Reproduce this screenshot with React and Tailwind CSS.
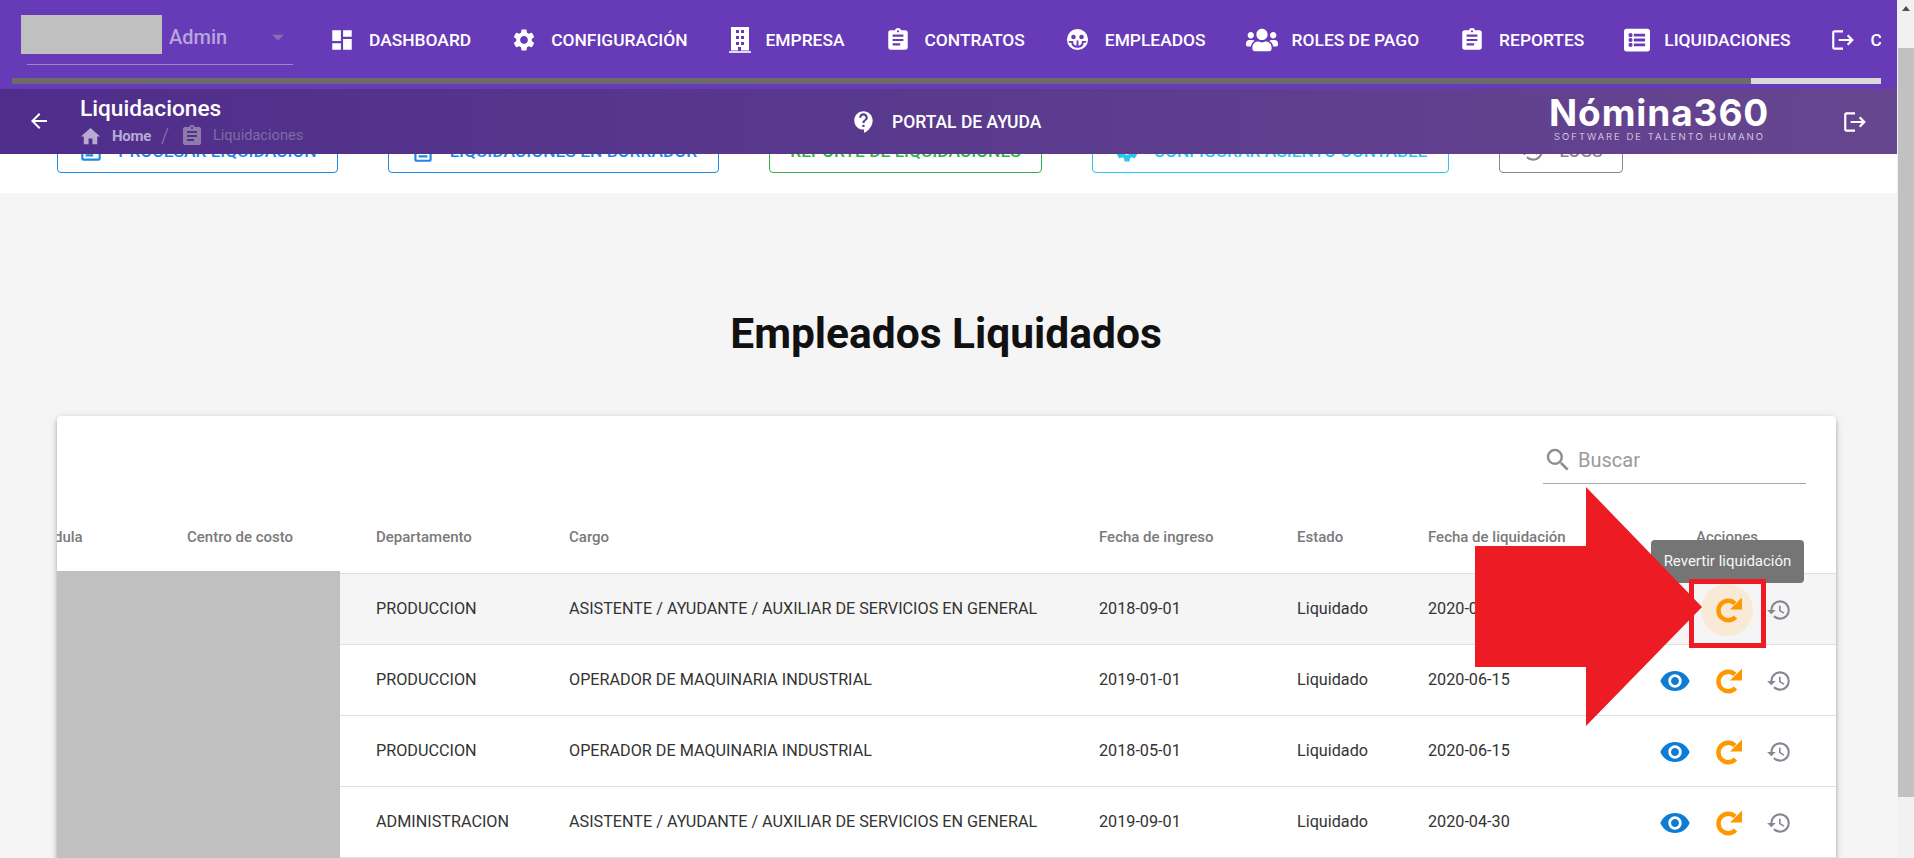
import {
  MdDashboard, MdSettings, MdAssignment, MdLogout, MdHome, MdContactSupport, MdArrowBack, MdSearch,
  MdVisibility, MdHistory, MdArrowDropDown, MdOutlineAssignment, MdOutlineDescription,
} from 'react-icons/md'
import { FaUsers, FaListAlt } from 'react-icons/fa'

function BuildingIcon({ className }) {
  return (
    <svg viewBox="0 0 24 26" className={className} aria-hidden="true">
      <path
        fillRule="evenodd"
        fill="currentColor"
        d="M3 0h18v23.5H3V0Zm5 3v3h3V3H8Zm5 0v3h3V3h-3ZM8 9v3h3V9H8Zm5 0v3h3V9h-3Zm-5 6v3h3v-3H8Zm5 0v3h3v-3h-3Zm-3 5v3.5h3V20h-3Z"
      />
      <rect x="1" y="24.2" width="22" height="1.6" fill="currentColor" />
    </svg>
  )
}

function FaceIcon({ className }) {
  return (
    <svg viewBox="0 0 24 24" className={className} aria-hidden="true">
      <circle cx="12" cy="12" r="11" fill="currentColor" />
      <circle cx="7.8" cy="9.4" r="2.4" fill="#673ab7" />
      <circle cx="16.2" cy="9.4" r="2.4" fill="#673ab7" />
      <path d="M3 14.5h3.5c0 3 1.5 5 5.5 5s5.5-2 5.5-5H21" fill="none" stroke="#673ab7" strokeWidth="2" />
      <path d="M12 13v6.5" fill="none" stroke="#673ab7" strokeWidth="2" />
    </svg>
  )
}

function RedoIcon({ className }) {
  return (
    <svg viewBox="0 0 26 26" className={className} aria-hidden="true">
      <path d="M19 6.5A9.75 9.75 0 1 0 19.5 20" fill="none" stroke="currentColor" strokeWidth="4.5" />
      <path d="M26 0.5V12.5H14Z" fill="currentColor" />
    </svg>
  )
}

const navItems = [
  { label: 'DASHBOARD', icon: MdDashboard, size: 'h-[26px] w-[26px]' },
  { label: 'CONFIGURACIÓN', icon: MdSettings, size: 'h-[26px] w-[26px]' },
  { label: 'EMPRESA', icon: BuildingIcon, size: 'h-[26px] w-[24px]' },
  { label: 'CONTRATOS', icon: MdAssignment, size: 'h-[26px] w-[26px]' },
  { label: 'EMPLEADOS', icon: FaceIcon, size: 'ml-px mr-[2px] h-[23px] w-[23px]' },
  { label: 'ROLES DE PAGO', icon: FaUsers, size: 'h-[26px] w-[32px]' },
  { label: 'REPORTES', icon: MdAssignment, size: 'h-[26px] w-[26px]' },
  { label: 'LIQUIDACIONES', icon: FaListAlt, size: 'h-[26px] w-[26px]' },
  { label: 'C', icon: MdLogout, size: 'h-[26px] w-[26px]' },
]

const rows = [
  { dept: 'PRODUCCION', cargo: 'ASISTENTE / AYUDANTE / AUXILIAR DE SERVICIOS EN GENERAL', ingreso: '2018-09-01', fecha: '2020-06-15', hover: true },
  { dept: 'PRODUCCION', cargo: 'OPERADOR DE MAQUINARIA INDUSTRIAL', ingreso: '2019-01-01', fecha: '2020-06-15' },
  { dept: 'PRODUCCION', cargo: 'OPERADOR DE MAQUINARIA INDUSTRIAL', ingreso: '2018-05-01', fecha: '2020-06-15' },
  { dept: 'ADMINISTRACION', cargo: 'ASISTENTE / AYUDANTE / AUXILIAR DE SERVICIOS EN GENERAL', ingreso: '2019-09-01', fecha: '2020-04-30' },
]

const colsClass = 'grid grid-cols-[130px_189px_193px_530px_198px_131px_221px_156px] items-center'

function NavBar() {
  return (
    <div className="flex h-[89px] bg-[#673ab7]">
      <div className="w-[329px] shrink-0">
        <div className="ml-[21px] mt-[15px] flex">
          <div className="h-[39px] w-[141px] bg-[#c0c0c0]" />
          <span className="ml-[7px] text-[20px] font-medium leading-[44px] text-[#b7a5dc]">Admin</span>
          <MdArrowDropDown className="ml-[37px] mt-[8px] h-[28px] w-[28px] text-[#8670b5]" />
        </div>
        <div className="ml-[27px] mt-[5px] h-px w-[266px] bg-[#9c85cf]" />
      </div>
      <div className="flex h-[80px] w-[1552px] items-center gap-[40px] overflow-hidden">
        {navItems.map(({ label, icon: Icon, size }) => (
          <div key={label} className="flex shrink-0 items-center gap-[14px] text-[17.4px] font-medium text-white">
            <Icon className={size} />
            <span className="whitespace-nowrap">{label}</span>
          </div>
        ))}
      </div>
    </div>
  )
}

function SubBar() {
  return (
    <div className="flex h-[65px] items-center bg-gradient-to-r from-[#4f2d8b] to-[#66468f] text-white">
      <MdArrowBack className="ml-[27px] h-[24px] w-[24px] shrink-0 -translate-y-px" />
      <div className="ml-[29px] w-[771px] shrink-0 self-start pt-[7px]">
        <div className="text-[22.7px] font-medium leading-[26px]">Liquidaciones</div>
        <div className="mt-[1px] flex h-[26px] items-center text-[15px]">
          <MdHome className="-ml-[1px] h-[23px] w-[23px] text-[#b9aad2]" />
          <span className="ml-[10px] font-bold tracking-[-0.3px] text-[#b9aad2]">Home</span>
          <span className="ml-[10px] text-[20px] font-light text-[#8f7cab]">/</span>
          <MdAssignment className="ml-[11px] h-[24px] w-[24px] text-[#8f7cab]" />
          <span className="ml-[9px] text-[14.6px] text-[#7f6ba3]">Liquidaciones</span>
        </div>
      </div>
      <MdContactSupport className="h-[26px] w-[26px] shrink-0" />
      <span className="ml-[15px] w-[657px] shrink-0 pt-[2px] text-[17.5px] font-medium">PORTAL DE AYUDA</span>
      <div className="w-[293px] shrink-0 self-start pt-[4px] font-['Inter',sans-serif]">
        <div className="text-[37px] font-bold leading-[39px] tracking-[0.9px]">Nómina360</div>
        <div className="ml-[5px] text-[9.5px] font-light leading-[10px] tracking-[2.03px] text-[#e6e0ef]">SOFTWARE DE TALENTO HUMANO</div>
      </div>
      <MdLogout className="h-[26px] w-[26px] shrink-0" />
    </div>
  )
}

function OutlineButton({ className, icon: Icon, children }) {
  return (
    <div className={`flex h-[44px] items-center justify-center gap-[14px] rounded-[4px] border text-[17.4px] font-medium ${className}`}>
      {Icon ? <Icon className="h-[26px] w-[26px]" /> : null}
      <span>{children}</span>
    </div>
  )
}

function EmployeeRow({ row }) {
  return (
    <div className={`${colsClass} h-[71px] border-b border-[#e0e0e0] pt-px text-[16.2px] text-[#333] ${row.hover ? 'bg-[#f5f5f5]' : ''}`}>
      <div />
      <div />
      <div>{row.dept}</div>
      <div>{row.cargo}</div>
      <div>{row.ingreso}</div>
      <div>Liquidado</div>
      <div>{row.fecha}</div>
      <div className="flex">
        <div className="flex h-[52px] w-[52px] items-center justify-center">
          <MdVisibility className="h-[32px] w-[32px] text-[#0c7cd5]" />
        </div>
        <div className={`flex h-[52px] w-[52px] items-center justify-center rounded-full ${row.hover ? 'bg-[#f8ead7]' : ''}`}>
          <RedoIcon className="ml-[3px] h-[26px] w-[26px] text-[#ff9800]" />
        </div>
        <div className="flex h-[52px] w-[52px] items-center justify-center">
          <MdHistory className="h-[26px] w-[26px] text-[#8b8494]" />
        </div>
      </div>
    </div>
  )
}

function EmployeesCard() {
  return (
    <div className="relative ml-[57px] mt-[58px] w-[1779px] rounded-[4px] bg-white pb-[20px] shadow-[0_2px_4px_-1px_rgba(0,0,0,0.2),0_4px_5px_0_rgba(0,0,0,0.14),0_1px_10px_0_rgba(0,0,0,0.12)]">
      <div className="flex h-[67px] justify-end pr-[30px] pt-[24px]">
        <div className="flex h-[44px] w-[263px] items-start border-b border-[#a8a8a8] pt-[5px] text-[#9a9a9a]">
          <MdSearch className="h-[30px] w-[30px] text-[#8d8d8d]" />
          <span className="ml-[5px] text-[20px] leading-[30px]">Buscar</span>
        </div>
      </div>

      <div className={`${colsClass} mt-[25px] h-[66px] border-b border-[#e0e0e0] pb-[6px] text-[15px] font-medium text-[#7a7a7a]`}>
        <div className="overflow-hidden">
          <div className="-ml-[3px]">dula</div>
        </div>
        <div>Centro de costo</div>
        <div>Departamento</div>
        <div>Cargo</div>
        <div>Fecha de ingreso</div>
        <div>Estado</div>
        <div>Fecha de liquidación</div>
        <div className="text-center">Acciones</div>
      </div>

      {rows.map((row) => (
        <EmployeeRow key={row.ingreso} row={row} />
      ))}

      {/* redacted cells */}
      <div className="absolute bottom-0 left-0 top-[155px] w-[283px] bg-[#c0c0c0]" />

      <div className="absolute left-[1594px] top-[124px] flex h-[43px] w-[153px] items-center justify-center rounded-[4px] bg-[#757575] text-[15px] text-[#f5f5f5]">
        Revertir liquidación
      </div>
    </div>
  )
}

function PageScrollbar() {
  return (
    <div className="w-[17px] shrink-0 bg-[#f1f1f1]">
      <div className="flex h-[17px] items-center justify-center">
        <svg viewBox="0 0 8 5" className="h-[5px] w-[8px] text-[#505050]" aria-hidden="true">
          <path d="M4 0l4 5H0Z" fill="currentColor" />
        </svg>
      </div>
      <div className="ml-px mt-[31px] h-[749px] bg-[#c1c1c1]" />
    </div>
  )
}

export default function App() {
  return (
    <div className="flex h-screen overflow-hidden bg-[#f5f5f5] font-['Roboto',sans-serif]">
      <div className="relative min-w-0 flex-1">
        <header className="relative z-20">
          <NavBar />
          <SubBar />
          <div className="absolute left-[12px] top-[78px] flex h-[6px] w-[1869px]">
            <div className="w-[1739px] bg-[#6b6b6b]" />
            <div className="flex-1 bg-[#d9d9d9]" />
          </div>
        </header>

        <section className="-mt-[25px] flex h-[64px] bg-white pl-[57px]">
          <OutlineButton icon={MdOutlineAssignment} className="w-[281px] border-[#1e88e5] text-[#1e88e5]">PROCESAR LIQUIDACIÓN</OutlineButton>
          <OutlineButton icon={MdOutlineDescription} className="ml-[50px] w-[331px] border-[#1e88e5] text-[#1e88e5]">LIQUIDACIONES EN BORRADOR</OutlineButton>
          <OutlineButton className="ml-[50px] w-[273px] border-[#2fb344] text-[#2fb344]">REPORTE DE LIQUIDACIONES</OutlineButton>
          <OutlineButton icon={MdSettings} className="ml-[50px] w-[357px] border-[#29c8ee] text-[#29c8ee]">CONFIGURAR ASIENTO CONTABLE</OutlineButton>
          <OutlineButton icon={MdHistory} className="ml-[50px] w-[124px] border-[#8a8494] text-[#8a8494]">LOGS</OutlineButton>
        </section>

        <h1 className="mt-[117px] pr-[5px] text-center text-[42.5px] font-bold leading-[48px] text-[#111]">Empleados Liquidados</h1>

        <EmployeesCard />

        {/* annotation drawn over the screenshot */}
        <svg viewBox="0 0 227 239" className="absolute left-[1475px] top-[487px] z-30 h-[239px] w-[227px]" aria-hidden="true">
          <path d="M0 59H111V0L227 120L111 239V180H0Z" fill="#ed1c24" />
        </svg>
        <div className="absolute left-[1689px] top-[579px] z-30 h-[69px] w-[77px] border-[5px] border-[#ed1c24]" />
      </div>
      <PageScrollbar />
    </div>
  )
}
